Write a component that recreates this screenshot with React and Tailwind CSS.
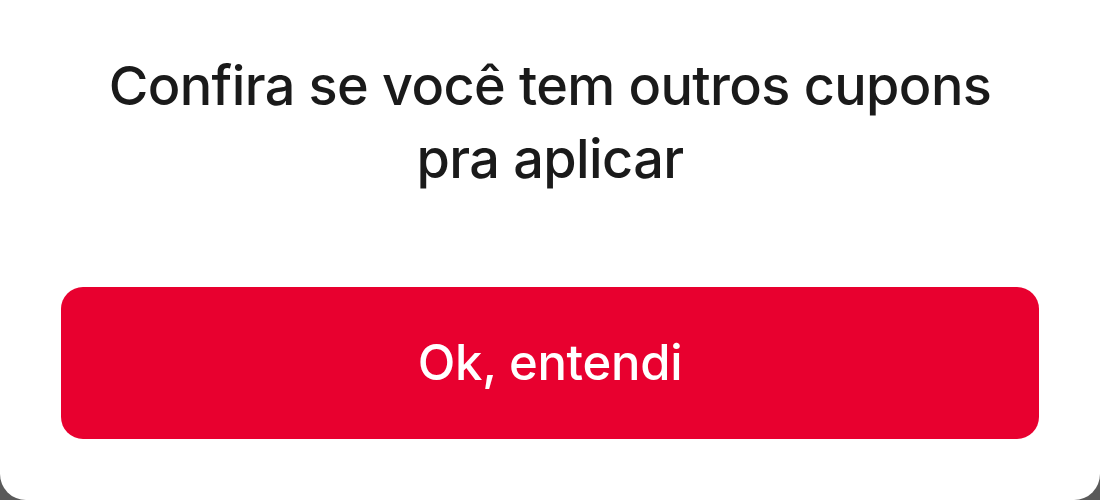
export default function App() {
  return (
    <div className="w-[1100px] h-[500px] bg-[#5a5a5a] overflow-hidden">
      <div
        className="w-full h-[500px] bg-white rounded-b-[26px] flex flex-col items-center"
        style={{ fontFamily: "Inter, 'Noto Sans', sans-serif" }}
      >
        <h1 className="mt-[49px] text-center text-[54px] leading-[73px] font-medium text-[#1a1a1a] tracking-[-0.6px] w-[900px]">
          Confira se você tem outros cupons pra aplicar
        </h1>
        <button className="mt-[92px] w-[978px] h-[152px] rounded-[22px] bg-[#e8002f] text-white text-[49px] font-medium tracking-[-0.3px]">
          Ok, entendi
        </button>
      </div>
    </div>
  );
}
